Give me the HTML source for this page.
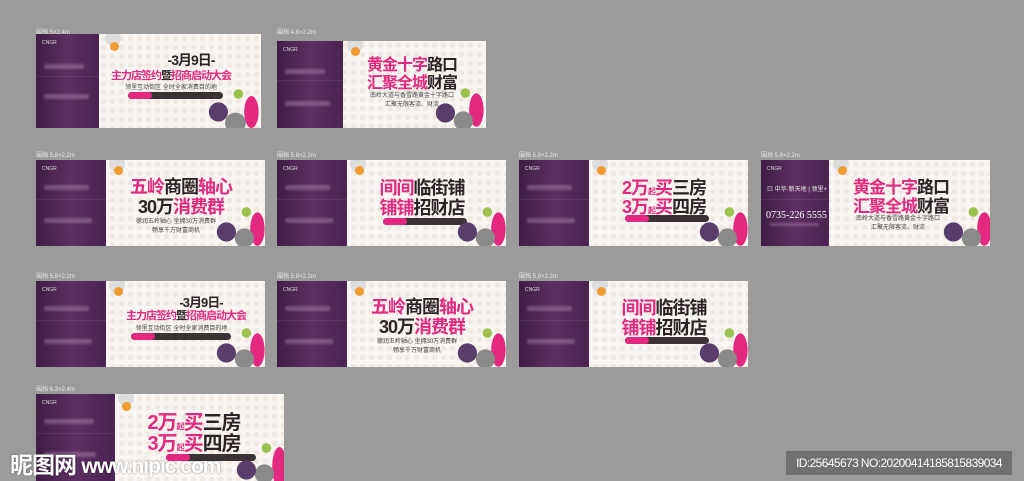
<!DOCTYPE html>
<html><head><meta charset="utf-8"><style>
*{margin:0;padding:0;box-sizing:border-box}
body{width:1024px;height:481px;background:#9a9b9a;position:relative;overflow:hidden;font-family:"Liberation Sans","Noto Sans CJK SC",sans-serif}
.lb{position:absolute;font-size:6px;color:#e8e8e8}
.p{position:absolute;background:#f8f5f2;overflow:hidden;background-image:radial-gradient(circle,#f0e9e2 2.5px,transparent 3px);background-size:9px 9px}
.pl{position:absolute;left:0;top:0;bottom:0;background:linear-gradient(90deg,#3f1d45,#5e2f63 50%,#4a2351)}
.pl:after{content:"";position:absolute;left:0;right:0;top:45%;height:1px;background:rgba(255,255,255,.08)}
.logo{position:absolute;left:6px;top:6px;font-size:5px;color:#ddd}
.blur{position:absolute;left:8px;height:5px;background:rgba(200,170,200,.35);filter:blur(1px);border-radius:2px}
.t{position:absolute;font-weight:bold;white-space:nowrap;text-align:center;letter-spacing:-1px}
.pk{color:#e3287f}.dk{color:#2b2326}
.s{position:absolute;font-size:6px;color:#444;white-space:nowrap;text-align:center}
.pill{position:absolute;height:7px;border-radius:4px;background:#3b3236}
.pill i{display:block;width:24px;height:7px;border-radius:4px;background:#e3287f}
.bl{position:absolute;border-radius:50%;transform:scale(.8) translate(8px,10px)}
.or{position:absolute;width:9px;height:9px;border-radius:50%;background:#f19a2e}
.gy{position:absolute;width:16px;height:16px;border-radius:50%;background:#ddd}
</style></head><body>

<!-- Panel A -->
<div class="lb" style="left:36px;top:27px">围挡 5×2.4m</div>
<div class="p" style="left:36px;top:34px;width:225px;height:94px">
<div class="pl" style="width:63px"><div class="logo">CNGR</div><div class="blur" style="top:30px;width:40px"></div><div class="blur" style="top:60px;width:45px"></div></div>
<div class="gy" style="left:69px;top:-4px"></div><div class="or" style="left:74px;top:8px"></div>
<div class="t dk" style="left:90px;top:16px;width:130px;font-size:14px">-3月9日-</div>
<div class="t pk" style="left:70px;top:33px;width:130px;font-size:11px">主力店签约<span class="dk">暨</span>招商启动大会</div>
<div class="s" style="left:80px;top:48px;width:110px">领里互动街区 全时全家消费目的地</div>
<div class="pill" style="left:92px;top:58px;width:95px"><i></i></div>
<div class="bl" style="left:200px;top:50px;width:18px;height:40px;background:#e3287f"></div>
<div class="bl" style="left:180px;top:68px;width:26px;height:26px;background:#8a8a8a"></div>
<div class="bl" style="left:164px;top:58px;width:24px;height:24px;background:#5a3d6a"></div>
<div class="bl" style="left:190px;top:46px;width:12px;height:12px;background:#9ac24c"></div>
</div>

<!-- Panel B -->
<div class="lb" style="left:277px;top:27px">围挡 4.8×2.2m</div>
<div class="p" style="left:277px;top:41px;width:209px;height:87px">
<div class="pl" style="width:66px"><div class="logo">CNGR</div><div class="blur" style="top:28px;width:40px"></div><div class="blur" style="top:60px;width:45px"></div></div>
<div class="gy" style="left:70px;top:-4px"></div><div class="or" style="left:74px;top:6px"></div>
<div class="t" style="left:80px;top:10px;width:110px;font-size:16px"><span class="pk">黄金十字</span><span class="dk">路口</span></div>
<div class="t" style="left:80px;top:28px;width:110px;font-size:16px"><span class="pk">汇聚全城</span><span class="dk">财富</span></div>
<div class="s" style="left:80px;top:49px;width:110px">南岭大道与香雪路黄金十字路口</div>
<div class="s" style="left:80px;top:58px;width:110px">汇聚无限客流、财流</div>
<div class="bl" style="left:184px;top:40px;width:18px;height:42px;background:#e3287f"></div>
<div class="bl" style="left:168px;top:60px;width:24px;height:24px;background:#8a8a8a"></div>
<div class="bl" style="left:150px;top:52px;width:24px;height:24px;background:#5a3d6a"></div>
<div class="bl" style="left:176px;top:38px;width:12px;height:12px;background:#9ac24c"></div>
</div>

<!-- Row2 -->
<div class="lb" style="left:36px;top:150px">围挡 5.8×2.2m</div>
<div class="p" style="left:36px;top:160px;width:229px;height:86px">
<div class="pl" style="width:70px"><div class="logo">CNGR</div><div class="blur" style="top:25px;width:45px"></div><div class="blur" style="top:58px;width:48px"></div></div>
<div class="gy" style="left:73px;top:-4px"></div><div class="or" style="left:78px;top:6px"></div>
<div class="t" style="left:85px;top:13px;width:120px;font-size:18px"><span class="pk">五岭</span><span class="dk">商圈</span><span class="pk">轴心</span></div>
<div class="t" style="left:85px;top:33px;width:120px;font-size:18px"><span class="dk">30万</span><span class="pk">消费群</span></div>
<div class="s" style="left:90px;top:56px;width:100px">德润五岭轴心 坐拥30万消费群</div>
<div class="s" style="left:90px;top:65px;width:100px">畅享千万财富商机</div>
<div class="bl" style="left:206px;top:40px;width:18px;height:42px;background:#e3287f"></div>
<div class="bl" style="left:190px;top:58px;width:24px;height:24px;background:#8a8a8a"></div>
<div class="bl" style="left:172px;top:52px;width:24px;height:24px;background:#5a3d6a"></div>
<div class="bl" style="left:198px;top:38px;width:12px;height:12px;background:#9ac24c"></div>
</div>

<div class="lb" style="left:277px;top:150px">围挡 5.8×2.2m</div>
<div class="p" style="left:277px;top:160px;width:229px;height:86px">
<div class="pl" style="width:70px"><div class="logo">CNGR</div><div class="blur" style="top:25px;width:45px"></div><div class="blur" style="top:58px;width:48px"></div></div>
<div class="gy" style="left:73px;top:-4px"></div><div class="or" style="left:78px;top:6px"></div>
<div class="t" style="left:90px;top:14px;width:110px;font-size:18px"><span class="pk">间间</span><span class="dk">临街铺</span></div>
<div class="t" style="left:90px;top:34px;width:110px;font-size:18px"><span class="pk">铺铺</span><span class="dk">招财店</span></div>
<div class="pill" style="left:106px;top:58px;width:84px"><i></i></div>
<div class="bl" style="left:206px;top:40px;width:18px;height:42px;background:#e3287f"></div>
<div class="bl" style="left:190px;top:58px;width:24px;height:24px;background:#8a8a8a"></div>
<div class="bl" style="left:172px;top:52px;width:24px;height:24px;background:#5a3d6a"></div>
<div class="bl" style="left:198px;top:38px;width:12px;height:12px;background:#9ac24c"></div>
</div>

<div class="lb" style="left:519px;top:150px">围挡 5.8×2.2m</div>
<div class="p" style="left:519px;top:160px;width:229px;height:86px">
<div class="pl" style="width:70px"><div class="logo">CNGR</div><div class="blur" style="top:25px;width:45px"></div><div class="blur" style="top:58px;width:48px"></div></div>
<div class="gy" style="left:73px;top:-4px"></div><div class="or" style="left:78px;top:6px"></div>
<div class="t" style="left:95px;top:14px;width:100px;font-size:18px"><span class="pk">2万<small style="font-size:8px">起</small>买</span><span class="dk">三房</span></div>
<div class="t" style="left:95px;top:33px;width:100px;font-size:18px"><span class="pk">3万<small style="font-size:8px">起</small>买</span><span class="dk">四房</span></div>
<div class="pill" style="left:106px;top:55px;width:84px"><i></i></div>
<div class="bl" style="left:206px;top:40px;width:18px;height:42px;background:#e3287f"></div>
<div class="bl" style="left:190px;top:58px;width:24px;height:24px;background:#8a8a8a"></div>
<div class="bl" style="left:172px;top:52px;width:24px;height:24px;background:#5a3d6a"></div>
<div class="bl" style="left:198px;top:38px;width:12px;height:12px;background:#9ac24c"></div>
</div>

<div class="lb" style="left:761px;top:150px">围挡 5.8×2.2m</div>
<div class="p" style="left:761px;top:160px;width:229px;height:86px">
<div class="pl" style="width:68px"><div class="logo">CNGR</div>
<div style="position:absolute;left:6px;top:24px;font-size:6px;color:#eee;white-space:nowrap">▥ 中华·新天地 | 领里+</div>
<div style="position:absolute;left:5px;top:50px;font-size:10px;color:#fff;white-space:nowrap;font-family:'Liberation Serif',serif">0735-226 5555</div>
<div class="blur" style="top:63px;width:50px;height:3px"></div></div>
<div class="gy" style="left:72px;top:-4px"></div><div class="or" style="left:77px;top:6px"></div>
<div class="t" style="left:80px;top:13px;width:120px;font-size:17px"><span class="pk">黄金十字</span><span class="dk">路口</span></div>
<div class="t" style="left:80px;top:32px;width:120px;font-size:17px"><span class="pk">汇聚全城</span><span class="dk">财富</span></div>
<div class="s" style="left:82px;top:53px;width:110px">南岭大道与香雪路黄金十字路口</div>
<div class="s" style="left:82px;top:62px;width:110px">汇聚无限客流、财流</div>
<div class="bl" style="left:208px;top:40px;width:18px;height:42px;background:#e3287f"></div>
<div class="bl" style="left:192px;top:58px;width:24px;height:24px;background:#8a8a8a"></div>
<div class="bl" style="left:174px;top:52px;width:24px;height:24px;background:#5a3d6a"></div>
<div class="bl" style="left:200px;top:38px;width:12px;height:12px;background:#9ac24c"></div>
</div>

<!-- Row3 -->
<div class="lb" style="left:36px;top:271px">围挡 5.8×2.2m</div>
<div class="p" style="left:36px;top:281px;width:229px;height:86px">
<div class="pl" style="width:70px"><div class="logo">CNGR</div><div class="blur" style="top:25px;width:45px"></div><div class="blur" style="top:58px;width:48px"></div></div>
<div class="gy" style="left:73px;top:-4px"></div><div class="or" style="left:78px;top:6px"></div>
<div class="t dk" style="left:100px;top:11px;width:130px;font-size:13px">-3月9日-</div>
<div class="t pk" style="left:80px;top:26px;width:140px;font-size:11px">主力店签约<span class="dk">暨</span>招商启动大会</div>
<div class="s" style="left:88px;top:42px;width:115px">领里互动街区 全时全家消费目的地</div>
<div class="pill" style="left:95px;top:52px;width:100px"><i></i></div>
<div class="bl" style="left:206px;top:40px;width:18px;height:42px;background:#e3287f"></div>
<div class="bl" style="left:190px;top:58px;width:24px;height:24px;background:#8a8a8a"></div>
<div class="bl" style="left:172px;top:52px;width:24px;height:24px;background:#5a3d6a"></div>
<div class="bl" style="left:198px;top:38px;width:12px;height:12px;background:#9ac24c"></div>
</div>

<div class="lb" style="left:277px;top:271px">围挡 5.8×2.2m</div>
<div class="p" style="left:277px;top:281px;width:229px;height:86px">
<div class="pl" style="width:70px"><div class="logo">CNGR</div><div class="blur" style="top:25px;width:45px"></div><div class="blur" style="top:58px;width:48px"></div></div>
<div class="gy" style="left:73px;top:-4px"></div><div class="or" style="left:78px;top:6px"></div>
<div class="t" style="left:85px;top:12px;width:120px;font-size:18px"><span class="pk">五岭</span><span class="dk">商圈</span><span class="pk">轴心</span></div>
<div class="t" style="left:85px;top:32px;width:120px;font-size:18px"><span class="dk">30万</span><span class="pk">消费群</span></div>
<div class="s" style="left:90px;top:55px;width:100px">德润五岭轴心 坐拥30万消费群</div>
<div class="s" style="left:90px;top:64px;width:100px">畅享千万财富商机</div>
<div class="bl" style="left:206px;top:40px;width:18px;height:42px;background:#e3287f"></div>
<div class="bl" style="left:190px;top:58px;width:24px;height:24px;background:#8a8a8a"></div>
<div class="bl" style="left:172px;top:52px;width:24px;height:24px;background:#5a3d6a"></div>
<div class="bl" style="left:198px;top:38px;width:12px;height:12px;background:#9ac24c"></div>
</div>

<div class="lb" style="left:519px;top:271px">围挡 5.8×2.2m</div>
<div class="p" style="left:519px;top:281px;width:229px;height:86px">
<div class="pl" style="width:70px"><div class="logo">CNGR</div><div class="blur" style="top:25px;width:45px"></div><div class="blur" style="top:58px;width:48px"></div></div>
<div class="gy" style="left:73px;top:-4px"></div><div class="or" style="left:78px;top:6px"></div>
<div class="t" style="left:90px;top:13px;width:110px;font-size:18px"><span class="pk">间间</span><span class="dk">临街铺</span></div>
<div class="t" style="left:90px;top:33px;width:110px;font-size:18px"><span class="pk">铺铺</span><span class="dk">招财店</span></div>
<div class="pill" style="left:106px;top:56px;width:84px"><i></i></div>
<div class="bl" style="left:206px;top:40px;width:18px;height:42px;background:#e3287f"></div>
<div class="bl" style="left:190px;top:58px;width:24px;height:24px;background:#8a8a8a"></div>
<div class="bl" style="left:172px;top:52px;width:24px;height:24px;background:#5a3d6a"></div>
<div class="bl" style="left:198px;top:38px;width:12px;height:12px;background:#9ac24c"></div>
</div>

<!-- Row4 -->
<div class="lb" style="left:36px;top:384px">围挡 6.3×2.4m</div>
<div class="p" style="left:36px;top:394px;width:248px;height:87px">
<div class="pl" style="width:79px"><div class="logo">CNGR</div><div class="blur" style="top:25px;width:50px"></div><div class="blur" style="top:58px;width:52px"></div></div>
<div class="gy" style="left:82px;top:-4px"></div><div class="or" style="left:86px;top:8px"></div>
<div class="t" style="left:108px;top:12px;width:100px;font-size:20px"><span class="pk">2万<small style="font-size:8px">起</small>买</span><span class="dk">三房</span></div>
<div class="t" style="left:108px;top:33px;width:100px;font-size:20px"><span class="pk">3万<small style="font-size:8px">起</small>买</span><span class="dk">四房</span></div>
<div class="pill" style="left:130px;top:60px;width:90px"><i></i></div>
<div class="bl" style="left:228px;top:40px;width:18px;height:50px;background:#e3287f"></div>
<div class="bl" style="left:210px;top:60px;width:24px;height:24px;background:#8a8a8a"></div>
<div class="bl" style="left:192px;top:56px;width:24px;height:24px;background:#5a3d6a"></div>
<div class="bl" style="left:218px;top:40px;width:12px;height:12px;background:#9ac24c"></div>
</div>

<div style="position:absolute;left:10px;top:446px;font-size:23px;font-weight:bold;color:#fff;white-space:nowrap;letter-spacing:-1px;text-shadow:0 0 2px rgba(0,0,0,.4)">昵图网 <span style="font-size:21px">www.nipic.com</span></div>
<div style="position:absolute;left:786px;top:451px;width:226px;height:24px;background:#6f706f;color:#fff;font-size:12px;line-height:24px;text-align:center;letter-spacing:-0.6px">ID:25645673 NO:20200414185815839034</div>
</body></html>
